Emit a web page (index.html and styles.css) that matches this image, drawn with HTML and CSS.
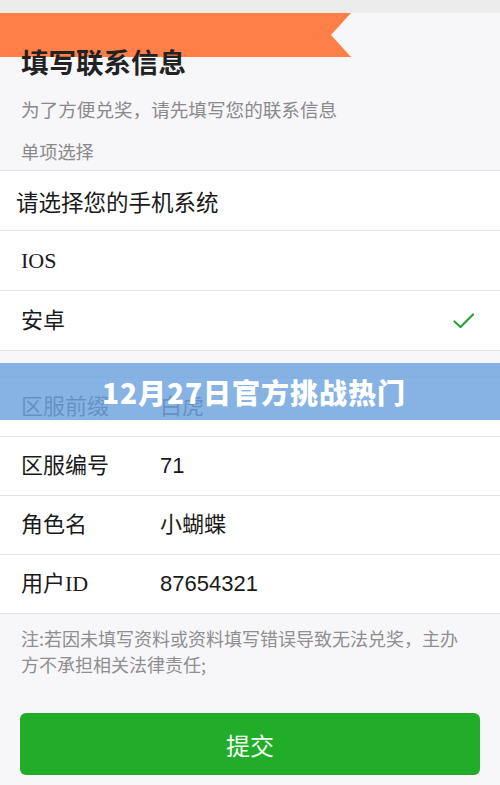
FILE: index.html
```html
<!DOCTYPE html>
<html lang="zh-CN">
<head>
<meta charset="utf-8">
<title>填写联系信息</title>
<link rel="stylesheet" href="styles.css">
</head>
<body>
<div class="topbar"></div>
<header class="header">
  <div class="ribbon"></div>
  <h1 class="title">填写联系信息</h1>
  <p class="subtitle">为了方便兑奖，请先填写您的联系信息</p>
  <p class="hint">单项选择</p>
</header>

<section class="group">
  <div class="row row-head">请选择您的手机系统</div>
  <div class="row"><span class="mixed">IOS</span></div>
  <div class="row row-check"><span class="mixed">安卓</span>
    <svg class="check" width="22" height="16" viewBox="0 0 22 16"><path d="M1.5 8.5 L7.5 14 L20 1.5" fill="none" stroke="#2a9f3a" stroke-width="2.2" stroke-linecap="round" stroke-linejoin="round"/></svg>
  </div>
</section>

<section class="group group-info">
  <div class="row"><span class="label">区服前缀</span><span class="value">白虎</span></div>
  <div class="row"><span class="label">区服编号</span><span class="value">71</span></div>
  <div class="row"><span class="label">角色名</span><span class="value">小蝴蝶</span></div>
  <div class="row"><span class="label">用户ID</span><span class="value">87654321</span></div>
</section>

<p class="note">注:若因未填写资料或资料填写错误导致无法兑奖，主办方不承担相关法律责任;</p>

<div class="actions"><button class="submit">提交</button></div>

<div class="banner">12月27日官方挑战热门</div>
</body>
</html>
```

FILE: styles.css
```css
html, body {
  margin: 0;
  padding: 0;
}
body {
  width: 500px;
  height: 785px;
  overflow: hidden;
  position: relative;
  background: #f7f6f9;
  font-family: "Noto Sans CJK SC", sans-serif;
  color: #222;
}
.topbar {
  height: 13px;
  background: #ececec;
}
.header {
  position: relative;
  padding: 30px 0 6px 21px;
}
.ribbon {
  position: absolute;
  left: 0;
  top: 0;
  width: 351px;
  height: 44px;
  background: #ff7f47;
  clip-path: polygon(0 0, 351px 0, 331px 22px, 351px 44px, 0 44px);
}
.title {
  position: relative;
  margin: 0;
  font-size: 27.5px;
  line-height: 36px;
  font-weight: 700;
  color: #222;
}
.subtitle {
  margin: 17px 0 0;
  font-size: 18.6px;
  line-height: 26px;
  color: #8a8a8a;
}
.hint {
  margin: 16px 0 0;
  font-size: 18.2px;
  line-height: 26px;
  color: #8a8a8a;
}
.group {
  background: #fff;
  border-top: 1px solid #e4e4e6;
}
.group-info {
  margin-top: 26px;
}
.row {
  display: flex;
  align-items: center;
  height: 59px;
  padding: 0 21px;
  border-bottom: 1px solid #e4e4e6;
  font-size: 22px;
  line-height: 30px;
  color: #1a1a1a;
}
.group-info .row {
  height: 58px;
}
.row-head {
  padding-left: 16px;
  font-size: 22.5px;
}
.row-check {
  justify-content: space-between;
  padding-right: 25px;
}
.mixed {
  font-family: "Liberation Serif", "Noto Sans CJK SC", serif;
}
.label {
  width: 139px;
  font-family: "Liberation Serif", "Noto Sans CJK SC", serif;
}
.value {
  font-family: "Liberation Sans", "Noto Sans CJK SC", sans-serif;
}
.note {
  margin: 0;
  padding: 11px 34px 0 21px;
  font-size: 18px;
  line-height: 26px;
  color: #8f8f8f;
}
.actions {
  padding: 36px 20px 0;
}
.submit {
  display: block;
  width: 100%;
  height: 62px;
  border: none;
  border-radius: 6px;
  background: #21ad2a;
  color: #f4fff4;
  font-family: "Noto Sans CJK SC", sans-serif;
  font-size: 24px;
}
.banner {
  position: absolute;
  left: 0;
  right: 0;
  top: 363px;
  height: 57px;
  display: flex;
  align-items: center;
  justify-content: center;
  padding-left: 8px;
  background: rgba(113, 166, 222, 0.85);
  color: #fff;
  font-family: "Noto Sans CJK SC", sans-serif;
  font-size: 28px;
  font-weight: 900;
  letter-spacing: 1px;
}
```
